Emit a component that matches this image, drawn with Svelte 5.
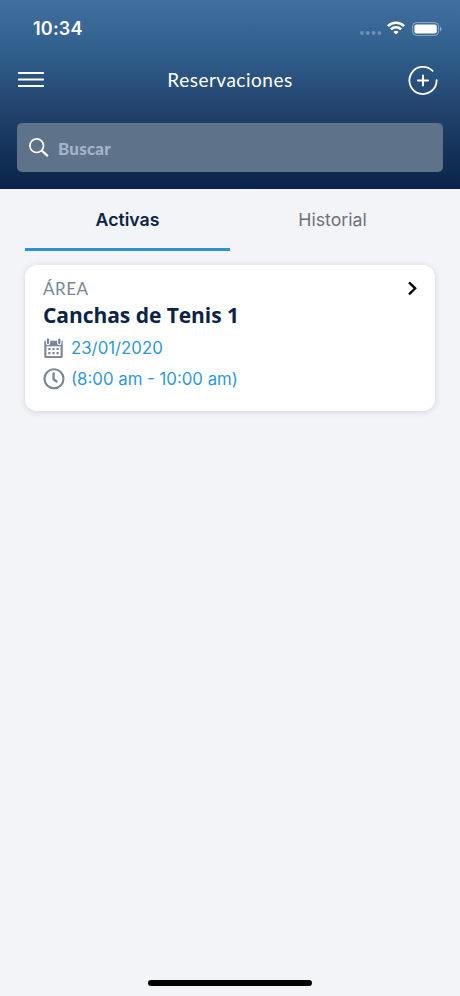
<script>
    let search = $state('');
    let activeTab = $state('activas');

    const tabs = [
        { id: 'activas', label: 'Activas' },
        { id: 'historial', label: 'Historial' }
    ];

    const reservations = [
        { id: 1, status: 'activas', area: 'Canchas de Tenis 1', date: '23/01/2020', time: '(8:00 am - 10:00 am)' }
    ];

    let filtered = $derived(
        reservations.filter(r =>
            r.status === activeTab &&
            r.area.toLowerCase().includes(search.toLowerCase())
        )
    );
</script>

<div class="screen">
    <header>
        <div class="status-bar">
            <span class="clock">10:34</span>
            <div class="status-icons">
                <svg class="signal" width="22" height="4" viewBox="0 0 22 4" fill="#fff">
                    <circle cx="2" cy="2" r="1.9" /><circle cx="7.8" cy="2" r="1.9" />
                    <circle cx="13.6" cy="2" r="1.9" /><circle cx="19.4" cy="2" r="1.9" />
                </svg>
                <svg class="wifi" width="18" height="14" viewBox="0 0 18 14" fill="none" stroke="#fff" stroke-width="2.6">
                    <path d="M0.9 5.1a11.6 11.6 0 0 1 16.2 0" />
                    <path d="M3.9 8.4a7.3 7.3 0 0 1 10.2 0" />
                    <path d="M9 13.6l-2.6-2.7a3.8 3.8 0 0 1 5.2 0z" fill="#fff" stroke="none" />
                </svg>
                <svg width="30" height="14" viewBox="0 0 30 14">
                    <rect x="0.6" y="0.6" width="26" height="12.8" rx="3.8" fill="none" stroke="#fff" stroke-opacity="0.45" />
                    <rect x="2.4" y="2.4" width="22.4" height="9.2" rx="2" fill="#fff" />
                    <path d="M28 4.8c1.9.6 1.9 3.8 0 4.4z" fill="#fff" fill-opacity="0.5" />
                </svg>
            </div>
        </div>

        <div class="nav-bar">
            <button class="icon-btn" aria-label="Menú">
                <svg width="26" height="18" viewBox="0 0 26 18" stroke="#fff" stroke-width="2">
                    <path d="M0.8 2h24.4M0.8 8.5h24.4M0.8 15h24.4" stroke-linecap="round" />
                </svg>
            </button>
            <h1>Reservaciones</h1>
            <button class="icon-btn" aria-label="Agregar">
                <svg width="30" height="30" viewBox="0 0 30 30" fill="none" stroke="#fff" stroke-width="1.8" stroke-linecap="round">
                    <path d="M24.6 5.8A13.6 13.6 0 1 0 28.6 15.1" />
                    <path d="M15 10.5v10M10 15.5h10" stroke-width="2" />
                </svg>
            </button>
        </div>

        <label class="search">
            <svg width="20" height="20" viewBox="0 0 20 20" fill="none" stroke="#fff" stroke-linecap="round">
                <circle cx="7.7" cy="7.7" r="6.8" stroke-width="1.7" />
                <path d="M12.9 12.7l5.4 4.9" stroke-width="2.2" />
            </svg>
            <input type="text" bind:value={search} placeholder="Buscar" />
        </label>
    </header>

    <main>
        <nav class="tabs">
            {#each tabs as tab (tab.id)}
                <button class="tab" class:active={activeTab === tab.id} onclick={() => (activeTab = tab.id)}>
                    {tab.label}
                </button>
            {/each}
        </nav>

        {#each filtered as item (item.id)}
            <article class="card">
                <div class="card-top">
                    <span class="label">ÁREA</span>
                    <svg width="10" height="16" viewBox="0 0 10 16" fill="none" stroke="#000" stroke-width="2.3">
                        <path d="M2 1.3L8.2 7.3l-6.2 6" />
                    </svg>
                </div>
                <h2>{item.area}</h2>
                <div class="row">
                    <svg width="22" height="22" viewBox="0 0 22 22">
                        <path d="M1.3 3.7h18.4v16a1.3 1.3 0 0 1-1.3 1.3H2.6a1.3 1.3 0 0 1-1.3-1.3z" fill="#7b8593" />
                        <path d="M3.4 9.3h14.2v9.8H3.4z" fill="#fff" />
                        <path d="M5 2.5v3.6M16.3 2.5v3.6" stroke="#fff" stroke-width="4.4" stroke-linecap="round" />
                        <path d="M5 2.6v3.5M16.3 2.6v3.5" stroke="#7b8593" stroke-width="2.3" stroke-linecap="round" />
                        <path d="M9.4 10.9h2.2v2.2H9.4zM13.5 10.9h2.2v2.2h-2.2zM5.3 10.9h2.2v2.2H5.3zM5.3 15h2.2v2.2H5.3zM9.4 15h2.2v2.2H9.4zM13.5 15h2.2v2.2h-2.2z" fill="#7b8593" />
                    </svg>
                    <span class="date">{item.date}</span>
                </div>
                <div class="row">
                    <svg width="22" height="22" viewBox="0 0 22 22" fill="none" stroke="#7b8593" stroke-width="2.1">
                        <circle cx="11" cy="10.8" r="9.5" />
                        <path d="M10.6 5.5v5.8l3 2.1" stroke-width="2.4" stroke-linecap="round" stroke-linejoin="round" />
                    </svg>
                    <span class="time">{item.time}</span>
                </div>
            </article>
        {/each}
    </main>

    <div class="home-indicator"></div>
</div>

<style>
    :global(body) { margin: 0; background: #f2f4f8; }
    button { padding: 0; border: 0; background: none; cursor: pointer; }
    svg { display: block; flex: none; }

    .screen { display: flex; flex-direction: column; width: 460px; height: 996px; background: #f2f4f8; font-family: Inter, sans-serif; }

    header { height: 189px; box-sizing: border-box; padding: 0 17px; background: linear-gradient(#42709e 0%, #31608e 26%, #23456f 56%, #0e2a50 91%, #0b234a 100%); color: #fff; }
    .status-bar { display: flex; align-items: center; justify-content: space-between; height: 57px; padding: 0 1px 0 16px; }
    .clock { font-size: 18px; font-weight: 600; letter-spacing: 0.2px; }
    .status-icons { display: flex; align-items: center; }
    .signal { margin: 9px 5px 0 0; opacity: 0.28; }
    .wifi { margin: -1px 7px 0 0; }

    .nav-bar { display: flex; align-items: center; justify-content: space-between; height: 46px; margin-bottom: 20px; padding: 0 5px 0 1px; }
    h1 { margin: 0 0 0 8px; font: 400 19px/24px Lato, sans-serif; letter-spacing: 0.5px; }

    .search { display: flex; align-items: center; gap: 9px; height: 49px; padding-left: 12px; border-radius: 5px; background: #5e7289; }
    .search input { flex: 1; min-width: 0; padding: 2px 0 0; border: 0; outline: 0; background: none; color: #fff; font: 900 17px/22px Lato, sans-serif; letter-spacing: 0.2px; }
    .search input::placeholder { color: #a2b4cb; opacity: 1; }

    main { flex: 1; padding: 0 25px; }
    .tabs { display: flex; margin-bottom: 14px; }
    .tab { flex: 1; height: 62px; padding-top: 2px; border-bottom: 3px solid transparent; color: #707175; font: 400 17.7px/22px Inter, sans-serif; }
    .tab.active { border-color: #2894d4; color: #0b2345; font-weight: 600; }

    .card { height: 146px; box-sizing: border-box; padding: 13px 18px 0; border-radius: 12px; background: #fff; box-shadow: 0 1px 6px rgba(0, 0, 0, 0.13); }
    .card-top { display: flex; align-items: center; justify-content: space-between; height: 22px; }
    .label { color: #7d8490; font: 400 17px/22px Lato, sans-serif; letter-spacing: 0.5px; }
    h2 { margin: 0 0 3px; color: #0b2345; font: 700 21px/30px "Open Sans", sans-serif; letter-spacing: -0.05px; }
    .row { display: flex; align-items: center; gap: 6px; height: 30.5px; color: #2e97d9; font-size: 16.8px; }

    .home-indicator { flex: none; align-self: center; width: 164px; height: 6px; margin-bottom: 10px; border-radius: 3px; background: #000; }
</style>
